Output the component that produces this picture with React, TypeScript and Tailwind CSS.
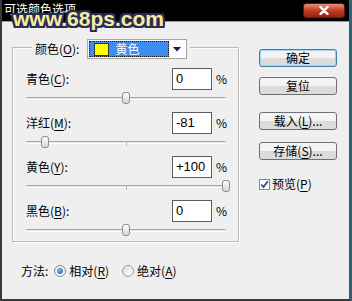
import React from 'react';

const Mn: React.FC<{ c: string }> = ({ c }) => (
  <span className="underline decoration-1 underline-offset-[2px]">{c}</span>
);

const Slider: React.FC<{ value: number; last?: boolean }> = ({ value, last }) => (
  <div className={last ? 'h-[19px] pt-[7px]' : 'h-[22px] pt-[7px]'}>
    <div className="relative ml-[13px] h-[3px] w-[200px] rounded-full border-t border-b border-t-[#a8a8a8] border-b-white bg-[#e4e4e4]">
      <div className="absolute left-[100px] top-[-1px] h-[5px] w-px bg-[#b4b4b4]" />
      <div
        className="absolute top-[-6px] h-[12px] w-[8px] -translate-x-1/2 rounded-[3px] border border-[#8e8e8e] bg-gradient-to-b from-white to-[#d6d6d6]"
        style={{ left: `${value + 100}px` }}
      />
    </div>
  </div>
);

const ValueRow: React.FC<{ label: React.ReactNode; value: string }> = ({ label, value }) => (
  <div className="flex h-[22px] items-center pl-[13px] pr-[12px]">
    <span className="flex-1">{label}</span>
    <div className="flex h-[22px] w-[40px] items-center border border-[#5c5c5c] bg-white pl-[3px] font-['Liberation_Sans',sans-serif] text-[13px]">
      {value}
    </div>
    <span className="ml-[4px] w-[10px]">%</span>
  </div>
);

const Btn: React.FC<{ children: React.ReactNode; focus?: boolean; className?: string }> = ({ children, focus, className }) => (
  <button
    className={
      'flex h-[18px] w-[78px] items-center justify-center rounded-[3px] border bg-gradient-to-b from-[#f4f4f4] from-50% to-[#dcdcdc] to-50% text-[12px] leading-none ' +
      (focus ? 'border-[#3c7fb1] shadow-[inset_0_0_0_1px_#9fd4f4] ' : 'border-[#707070] ') +
      (className ?? '')
    }
  >
    {children}
  </button>
);

export default function App() {
  return (
    <div className="relative h-[301px] w-[352px] overflow-hidden border-l-[2px] border-r-[3px] border-b-[2px] border-l-[#3a3a3a] border-r-[#2c6676] border-b-[#3a3a3a] bg-[#efefef] font-['Noto_Sans_CJK_SC',sans-serif] text-[12px] text-black">
      {/* title bar */}
      <div className="flex h-[21px] items-start bg-black">
        <span className="ml-[2px] mt-[2px] leading-[14px] text-white">可选颜色选项</span>
        <div className="ml-auto mr-[4px] mt-[3px] flex h-[15px] w-[42px] items-center justify-center rounded-[3px] border border-[#5a1a12] bg-gradient-to-b from-[#e0907e] via-[#c23a22] to-[#9a2412]">
          <svg width="10" height="9" viewBox="0 0 10 9">
            <path d="M1.5 1 L8.5 8 M8.5 1 L1.5 8" stroke="white" strokeWidth="2.4" strokeLinecap="round" />
          </svg>
        </div>
      </div>

      <div className="flex border-t border-[#9a9a9a]">
        {/* left column */}
        <div className="flex flex-col">
          <div className="ml-[10px] mt-[25px] w-[227px] border border-[#b9b9b9] shadow-[inset_1px_1px_0_#fff,1px_1px_0_#fff]">
            <div className="-mt-[9px] ml-[19px] flex h-[20px] w-fit items-center bg-[#efefef] px-[3px]">
              <span>颜色(<Mn c="O" />):</span>
              <div className="ml-[8px] flex h-[20px] w-[100px] items-center border border-[#a5a5a5] bg-white p-[1px]">
                <div className="flex h-full w-[80px] items-center border border-dotted border-[#1a1a1a] bg-[#3d8ef0] pl-[4px] text-white">
                  <span className="h-[13px] w-[15px] border border-[#333] bg-[#ffff00]" />
                  <span className="ml-[6px] leading-none">黄色</span>
                </div>
                <div className="flex flex-1 items-center justify-center">
                  <svg width="8" height="5" viewBox="0 0 8 5">
                    <path d="M0 0 H8 L4 4.5 Z" fill="#0d1a55" />
                  </svg>
                </div>
              </div>
            </div>

            <div className="mt-[9px]">
              <ValueRow label={<>青色(<Mn c="C" />):</>} value="0" />
              <Slider value={0} />
              <ValueRow label={<>洋红(<Mn c="M" />):</>} value="-81" />
              <Slider value={-81} />
              <ValueRow label={<>黄色(<Mn c="Y" />):</>} value="+100" />
              <Slider value={100} />
              <ValueRow label={<>黑色(<Mn c="B" />):</>} value="0" />
              <Slider value={0} last />
            </div>
          </div>

          {/* method */}
          <div className="ml-[19px] mt-[22px] flex h-[14px] items-center">
            <span>方法:</span>
            <span className="ml-[6px] flex h-[12px] w-[12px] items-center justify-center rounded-full border border-[#8a8a8a] bg-gradient-to-br from-[#e8e8e8] to-white">
              <span className="h-[6px] w-[6px] rounded-full bg-[radial-gradient(circle_at_35%_35%,#7fb6e8,#1d5a9e)]" />
            </span>
            <span className="ml-[3px]">相对(<Mn c="R" />)</span>
            <span className="ml-[13px] h-[12px] w-[12px] rounded-full border border-[#9a9a9a] bg-gradient-to-br from-[#dcdcdc] to-white" />
            <span className="ml-[3px]">绝对(<Mn c="A" />)</span>
          </div>
        </div>

        {/* right column */}
        <div className="ml-[20px] flex flex-col">
          <Btn focus className="mt-[27px]">确定</Btn>
          <Btn className="mt-[10px]">复位</Btn>
          <Btn className="mt-[17px]">
            载入(<Mn c="L" />)...
          </Btn>
          <Btn className="mt-[12px]">
            存储(<Mn c="S" />)...
          </Btn>
          <div className="mt-[15px] flex items-center">
            <span className="flex h-[11px] w-[11px] items-center justify-center border border-[#7a8aa0] bg-white">
              <svg width="9" height="9" viewBox="0 0 9 9">
                <path d="M1.2 4.5 L3.5 7 L7.8 1.2" fill="none" stroke="#2a4f9a" strokeWidth="1.8" />
              </svg>
            </span>
            <span className="ml-[2px]">预览(<Mn c="P" />)</span>
          </div>
        </div>
      </div>

      {/* watermark overlay */}
      <span className="pointer-events-none absolute left-[11px] top-[8px] font-['Liberation_Sans',sans-serif] text-[21px] font-bold leading-none text-[#f3efa2] [text-shadow:2px_0_#2b2b55,-2px_0_#2b2b55,0_2px_#2b2b55,0_-2px_#2b2b55,2px_2px_#2b2b55,-2px_-2px_#2b2b55,2px_-2px_#2b2b55,-2px_2px_#2b2b55]">
        www.68ps.com
      </span>
    </div>
  );
}
